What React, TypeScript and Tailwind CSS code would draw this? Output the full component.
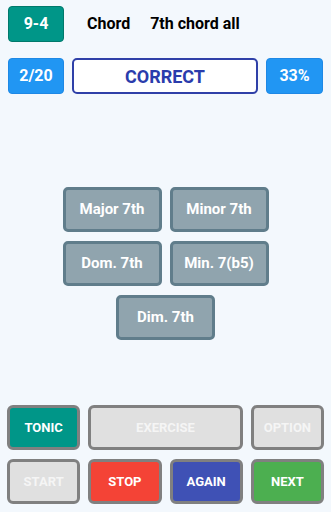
import React from 'react';

const answers = ['Major 7th', 'Minor 7th', 'Dom. 7th', 'Min. 7(b5)'];

const AnswerButton: React.FC<{ label: string }> = ({ label }) => (
  <button className="h-[45px] w-[99px] rounded-[5px] border-[3px] border-[#607d8b] bg-[#90a4ae] text-[15px] font-bold text-white">
    {label}
  </button>
);

const ControlButton: React.FC<{ label: string; bg: string; text?: string; wide?: boolean }> = ({ label, bg, text = 'text-white', wide }) => (
  <button
    className={`h-[45px] rounded-[6px] border-[3px] border-[#808080] text-[13px] font-bold ${bg} ${text} ${wide ? 'col-span-2' : ''}`}
  >
    {label}
  </button>
);

export default function App() {
  return (
    <div className="flex h-[512px] w-[331px] flex-col bg-[#f3f8fd] font-['Roboto',sans-serif]">
      {/* Cabeçalho */}
      <div className="flex items-center px-2 pt-[6px]">
        <div className="flex h-[36px] w-[56px] items-center justify-center rounded-[4px] border border-[#00796b] bg-[#009688] text-[16px] font-bold text-white">
          9-4
        </div>
        <span className="ml-[23px] text-[16px] font-bold text-black">Chord</span>
        <span className="ml-[20px] text-[16px] font-bold text-black">7th chord all</span>
      </div>

      <div className="mt-[16px] flex items-center gap-2 px-2">
        <div className="flex h-[36px] w-[56px] items-center justify-center rounded-[4px] border border-[#1e88e5] bg-[#2196f3] text-[16px] font-bold text-white">
          2/20
        </div>
        <div className="flex h-[36px] flex-1 items-center justify-center rounded-[5px] border-2 border-[#2f40a8] bg-white text-[18px] font-bold text-[#2a3cac]">
          CORRECT
        </div>
        <div className="flex h-[36px] w-[57px] items-center justify-center rounded-[4px] border border-[#1e88e5] bg-[#2196f3] text-[16px] font-bold text-white">
          33%
        </div>
      </div>

      {/* Respostas */}
      <div className="mt-[93px] flex flex-col items-center gap-[9px]">
        <div className="flex gap-[8px]">
          <AnswerButton label={answers[0]} />
          <AnswerButton label={answers[1]} />
        </div>
        <div className="flex gap-[8px]">
          <AnswerButton label={answers[2]} />
          <AnswerButton label={answers[3]} />
        </div>
        <AnswerButton label="Dim. 7th" />
      </div>

      {/* Controles */}
      <div className="mt-auto mb-[8px] grid grid-cols-4 gap-x-[8px] gap-y-[9px] px-[7px]">
        <ControlButton label="TONIC" bg="bg-[#009688]" />
        <ControlButton label="EXERCISE" bg="bg-[#e0e0e0]" text="text-[#f5f5f5]" wide />
        <ControlButton label="OPTION" bg="bg-[#e0e0e0]" text="text-[#f5f5f5]" />
        <ControlButton label="START" bg="bg-[#e0e0e0]" text="text-[#f5f5f5]" />
        <ControlButton label="STOP" bg="bg-[#f44336]" />
        <ControlButton label="AGAIN" bg="bg-[#3f51b5]" />
        <ControlButton label="NEXT" bg="bg-[#4caf50]" />
      </div>
    </div>
  );
}
